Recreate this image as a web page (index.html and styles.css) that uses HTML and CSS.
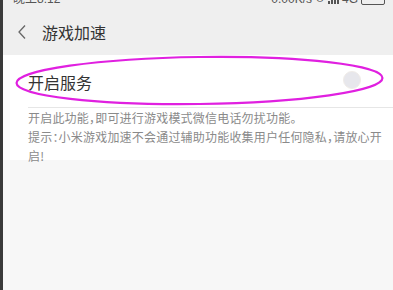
FILE: index.html
```html
<!DOCTYPE html>
<html lang="zh">
<head>
<meta charset="utf-8">
<link rel="stylesheet" href="styles.css">
</head>
<body>
<div class="strip"></div>
<div class="page">
  <div class="top">
    <div class="status">
      <span class="time">晚上8:12</span>
      <span class="right">0.00K/s <span class="ic">⊙</span> <span class="sig"><i></i><i></i><i></i><i></i></span> 4G <span class="bat"></span></span>
    </div>
    <div class="titlebar">
      <svg class="back" width="10" height="16" viewBox="0 0 10 16"><path d="M8 1.5 L2 8 L8 14.5" fill="none" stroke="#666" stroke-width="1.3"/></svg>
      <span class="title">游戏加速</span>
    </div>
  </div>
  <div class="card">
    <div class="row">
      <span class="label">开启服务</span>
      <span class="toggle"></span>
    </div>
    <div class="desc">
      <p>开启此功能，即可进行游戏模式微信电话勿扰功能。</p>
      <p>提示：小米游戏加速不会通过辅助功能收集用户任何隐私，请放心开启!</p>
    </div>
  </div>
</div>
<svg class="mark" width="393" height="290" viewBox="0 0 393 290">
  <ellipse cx="199.5" cy="80.5" rx="183" ry="23.5" transform="rotate(-0.8 199.5 80.5)" fill="none" stroke="#e020e0" stroke-width="2.2"/>
</svg>
</body>
</html>
```
FILE: styles.css
```css
html, body {
  margin: 0;
  padding: 0;
  background: #f7f7f7;
  width: 393px;
  height: 290px;
  overflow: hidden;
  font-family: "Noto Sans CJK SC", "Noto Sans", sans-serif;
}
.strip {
  position: absolute;
  left: 0;
  top: 0;
  width: 3px;
  height: 290px;
  background: #3a3a3a;
  z-index: 2;
}
.page {
  display: flex;
  flex-direction: column;
}
.top {
  background: #efefef;
  height: 55px;
  display: flex;
  flex-direction: column;
}
.status {
  height: 6px;
  overflow: hidden;
  display: flex;
  justify-content: space-between;
  align-items: flex-end;
  padding: 0 8px 0 13px;
  font-size: 12px;
  line-height: 14px;
  color: #555;
  font-family: "Liberation Sans", "Noto Sans CJK SC", sans-serif;
}
.status span.time, .status span.right {
  display: block;
  height: 14px;
  flex: none;
}
.right {
  display: flex !important;
  align-items: center;
  gap: 3px;
}
.sig { display: inline-flex; align-items: flex-end; gap: 1px; height: 10px; }
.sig i { display: block; width: 2px; background: #555; }
.sig i:nth-child(1) { height: 3px; }
.sig i:nth-child(2) { height: 5px; }
.sig i:nth-child(3) { height: 7px; }
.sig i:nth-child(4) { height: 9px; }
.bat { display: inline-block; width: 22px; height: 9px; border: 1px solid #555; border-radius: 2px; }
.ic { font-size: 10px; }
.titlebar {
  flex: 1;
  display: flex;
  align-items: center;
  padding: 2px 0 0 17px;
}
.back { display: block; }
.title {
  margin-left: 15px;
  font-size: 16px;
  color: #333;
}
.card {
  background: #fff;
  height: 105px;
}
.row {
  margin-left: 28px;
  height: 52px;
  border-bottom: 1px solid #e6e6e6;
  display: flex;
  align-items: center;
  justify-content: space-between;
  padding-right: 32px;
}
.label {
  font-size: 16px;
  color: #333;
  padding-top: 1px;
}
.toggle {
  width: 16px;
  height: 16px;
  border-radius: 50%;
  background: #e7e7ec;
  border: 1px solid #f0ece8;
  margin-top: -2px;
}
.desc {
  margin: 0 10px 0 28px;
  padding-top: 0;
  font-size: 12px;
  line-height: 19px;
  color: #8a8a8a;
  font-feature-settings: "halt";
  letter-spacing: 0.2px;
}
.desc p { margin: 0; }
.mark {
  position: absolute;
  left: 0;
  top: 0;
  pointer-events: none;
}
```
